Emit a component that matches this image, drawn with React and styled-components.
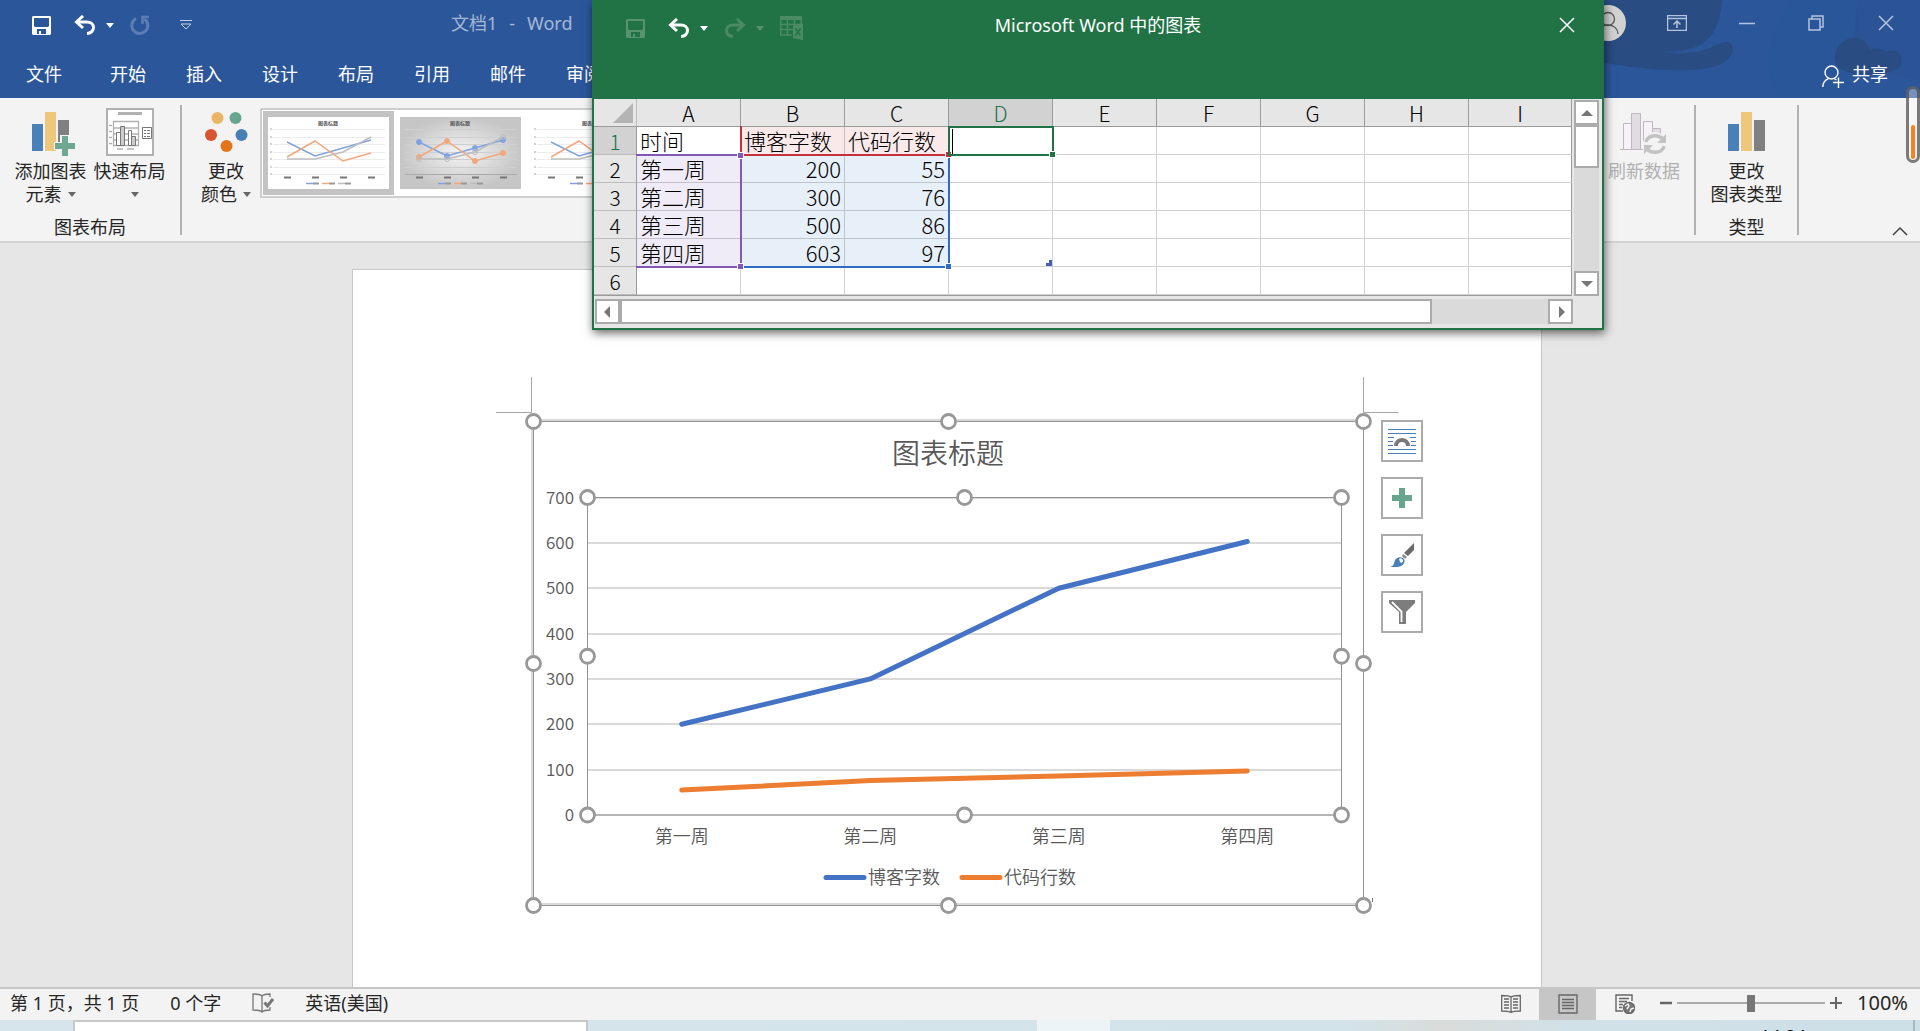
import React, { useState } from 'react';
import styled, { createGlobalStyle } from 'styled-components';

const GlobalStyle = createGlobalStyle`
	* { box-sizing: border-box; }
	body {
		margin: 0;
		overflow: hidden;
		font-family: "Noto Sans", "Noto Sans CJK SC", sans-serif;
		font-size: 18px;
		color: #262626;
	}
	button {
		border: 0;
		padding: 0;
		background: none;
		font: inherit;
		color: inherit;
	}
	svg { display: block; }
`;

const App = () => {
	return (
		<Shell>
			<GlobalStyle />
			<TitleArea />
			<Ribbon />
			<Workspace>
				<Page>
					<Chart />
					<ChartTools>
						<ToolButton type="button" aria-label="布局选项"><LayoutIcon /></ToolButton>
						<ToolButton type="button" aria-label="图表元素"><PlusIcon /></ToolButton>
						<ToolButton type="button" aria-label="图表样式"><BrushIcon /></ToolButton>
						<ToolButton type="button" aria-label="图表筛选器"><FunnelIcon /></ToolButton>
					</ChartTools>
				</Page>
			</Workspace>
			<StatusBar />
			<Taskbar>
				<TaskSearch />
				<TaskActive />
				<Clock>14:24</Clock>
			</Taskbar>
			<SheetWindow />
			<FloatScroll><i /></FloatScroll>
		</Shell>
	);
};

/* ---------- title bar and tabs ---------- */

const tabs = ['文件', '开始', '插入', '设计', '布局', '引用', '邮件', '审阅'];

const TitleArea = () => (
	<Header>
		<HeaderArt />
		<TitleRow>
			<QuickAccess>
				<button type="button" aria-label="保存"><SaveIcon color="#fff" hole="#2b579a" /></button>
				<Split>
					<button type="button" aria-label="撤消"><UndoIcon color="#fff" /></button>
					<Caret $color="#fff" />
				</Split>
				<button type="button" aria-label="重复" disabled><RepeatIcon /></button>
				<More type="button" aria-label="自定义快速访问工具栏"><MoreIcon /></More>
			</QuickAccess>
			<DocName>
				<span>文档1</span>
				<span>-</span>
				<span>Word</span>
			</DocName>
			<WindowButtons>
				<Avatar />
				<button type="button" aria-label="功能区显示选项">
					<svg width="20" height="16" viewBox="0 0 20 16" fill="none" stroke="#b4c4dd">
						<path d="M.5 .5h19v15H.5zM.5 3.5h19M10 13V6M6.500 9.500 10 6l3.500 3.500" strokeWidth="1.500" />
					</svg>
				</button>
				<button type="button" aria-label="最小化">
					<svg width="16" height="16"><path d="M0 8.500h16" stroke="#b4c4dd" strokeWidth="1.500" /></svg>
				</button>
				<button type="button" aria-label="还原">
					<svg width="16" height="16" fill="none" stroke="#b4c4dd" strokeWidth="1.500">
						<path d="M1 4h11v11H1zM4 4V1h11v11h-3" />
					</svg>
				</button>
				<button type="button" aria-label="关闭">
					<svg width="16" height="16"><path d="m1 1 14 14M15 1 1 15" stroke="#b4c4dd" strokeWidth="1.500" /></svg>
				</button>
			</WindowButtons>
		</TitleRow>
		<TabRow>
			{tabs.map(t => <Tab key={t} type="button">{t}</Tab>)}
			<Share type="button">
				<svg width="22" height="23" viewBox="0 0 22 23" fill="none" stroke="#fff" strokeWidth="1.400">
					<circle cx="9.500" cy="7.500" r="6.500" />
					<path d="M.7 22c.3-4 2.300-7 5.800-8.300M12.500 13.800l2 1M16.500 12.500V23M11 17.500h11" />
				</svg>
				共享
			</Share>
		</TabRow>
	</Header>
);

const HeaderArt = () => (
	<Art width="330" height="98" viewBox="0 0 330 98" aria-hidden="true">
		<path d="M0 0h132c-1 22-8 38-24 46-12 6-30 7-42 4 24 6 46 3 60-5 9-5 16-4 17 3 1 8-9 17-24 20-36 6-84-1-119-8z" fill="#294c82" />
		<path d="M190 98c-18-20-14-64 8-90L205 0h60c8 30-2 70-20 98z" fill="#285397" opacity=".5" />
		<path d="M268 0c-4 18-2 34-4 52 20 20 46 26 66 28V0z" fill="#2a5290" opacity=".5" />
		<path d="M246 64c-4-14 6-26 18-26 10 0 14 6 16 12 8-4 14 2 20 1 10-3 14 8 10 16-14 10-54 12-64-3z" fill="#294c82" />
	</Art>
);

const Header = styled.header`
	position: relative;
	height: 98px;
	background: #2b579a;
	color: #fff;
`;
const Art = styled.svg`
	position: absolute;
	right: 0;
	top: 0;
`;
const TitleRow = styled.div`
	position: relative;
	display: flex;
	align-items: center;
	height: 48px;
	padding: 0 26px 2px 32px;
`;
const QuickButtons = styled.div`
	display: flex;
	align-items: center;
	gap: 16px;

	> button:first-child { padding-right: 7px; }
`;
const QuickAccess = styled(QuickButtons)`
	width: 419px;
	padding-top: 4px;
`;
const More = styled.button`
	padding-left: 14px;
`;
const Split = styled.div`
	display: flex;
	align-items: center;
	gap: 10px;
`;
const Caret = styled.i`
	border: 4px solid transparent;
	border-top: 5px solid ${p => p.$color || '#666'};
	border-bottom: 0;
`;
const DocName = styled.div`
	display: flex;
	gap: 12px;
	line-height: 46px;
	color: #a6b8d6;
`;
const WindowButtons = styled.div`
	display: flex;
	align-items: center;
	gap: 53px;
	margin-left: auto;

	button:nth-of-type(1) { margin-left: -12px; margin-right: -1px; }
	button:nth-of-type(4) { margin-left: 1px; }
`;
const AvatarRing = styled.svg`
	flex: none;
`;
const Avatar = () => (
	<AvatarRing width="36" height="36" viewBox="0 0 36 36" fill="none" stroke="#555" strokeWidth="1.300">
		<circle cx="18" cy="18" r="18" fill="#d2d2d2" stroke="none" />
		<circle cx="18" cy="14" r="6.500" />
		<path d="M8 29c0-5 4-9 10-9s10 4 10 9" />
	</AvatarRing>
);
const TabRow = styled.nav`
	position: relative;
	display: flex;
	align-items: center;
	height: 50px;
	padding-right: 32px;
`;
const Tab = styled.button`
	padding: 0 20px;

	&:first-child { padding: 0 28px 0 26px; }
`;
const Share = styled.button`
	display: flex;
	align-items: center;
	gap: 8px;
	margin-left: auto;

	svg { margin-top: 6px; }
`;

/* ---------- ribbon ---------- */

const Ribbon = () => (
	<RibbonBar>
		<Group>
			<Tools>
				<BigButton type="button">
					<AddElementIcon />
					<span>添加图表</span>
					<Line>元素<Caret /></Line>
				</BigButton>
				<BigButton type="button">
					<QuickLayoutIcon />
					<span>快速布局</span>
					<Line>&nbsp;<Caret /></Line>
				</BigButton>
			</Tools>
			<GroupName>图表布局</GroupName>
		</Group>
		<Rule />
		<ColorGroup>
			<BigButton type="button">
				<ColorsIcon />
				<span>更改</span>
				<Line>颜色<Caret /></Line>
			</BigButton>
		</ColorGroup>
		<Gallery>
			<Style type="button" $active aria-label="样式 1"><Thumb /></Style>
			<Style type="button" aria-label="样式 2"><Thumb dark /></Style>
			<Style type="button" aria-label="样式 3"><Thumb /></Style>
		</Gallery>
		<DataGroup>
			<BigButton type="button" disabled>
				<RefreshIcon />
				<span>刷新数据</span>
			</BigButton>
		</DataGroup>
		<Rule />
		<TypeGroup>
			<BigButton type="button">
				<BarsIcon />
				<span>更改</span>
				<Line>图表类型</Line>
			</BigButton>
			<GroupName>类型</GroupName>
		</TypeGroup>
		<Rule />
		<RibbonEnd>
			<button type="button" aria-label="折叠功能区">
				<svg width="16" height="10"><path d="m1 9 7-7 7 7" fill="none" stroke="#444" strokeWidth="1.500" /></svg>
			</button>
		</RibbonEnd>
	</RibbonBar>
);

const RibbonBar = styled.section`
	display: flex;
	height: 145px;
	padding-top: 7px;
	background: #f3f3f3;
	border-bottom: 2px solid #d2d2d2;
`;
const Group = styled.div`
	display: flex;
	flex-direction: column;
	align-items: center;
	gap: 3px;
	width: 180px;
	padding-top: 3px;
`;
const Tools = styled.div`
	display: flex;
	gap: 7px;
`;
const BigButton = styled.button`
	display: flex;
	flex-direction: column;
	align-items: center;
	height: 104px;
	line-height: 23px;
	white-space: nowrap;

	svg { height: 50px; margin-bottom: 2px; }
	&:disabled { color: #b1b1b1; }
`;
const Line = styled.span`
	display: flex;
	align-items: center;
	gap: 6px;
	min-height: 23px;
`;
const GroupName = styled.span`
	line-height: 24px;
`;
const Rule = styled.i`
	width: 2px;
	height: 130px;
	background: #b1b1b1;
`;
const ColorGroup = styled(Group)`
	width: 78px;
	padding-left: 10px;
`;
const Gallery = styled.div`
	display: flex;
	gap: 1px;
	flex: 1;
	height: 90px;
	margin: 3px 60px 0 0;
	padding-left: 1px;
	overflow: hidden;
	background: #fff;
	border: 2px solid #cfcfcf;
`;
const Style = styled.button`
	flex: none;
	width: 131px;
	margin: 1px 0;
	padding: 0 5px;
	background: ${p => (p.$active ? '#c3c3c3' : 'transparent')};
`;
const DataGroup = styled(Group)`
	width: 100px;
`;
const TypeGroup = styled(Group)`
	width: 101px;
`;
const RibbonEnd = styled.div`
	display: flex;
	align-items: flex-end;
	justify-content: flex-end;
	width: 121px;
	padding: 0 12px 5px 0;
`;

const thumbSeries = [
	['#7ea3e0', [[19, 25], [47, 39], [75, 31], [103, 23]]],
	['#f4a77b', [[19, 40], [47, 24], [75, 44], [103, 36]]],
	['#bdbdbd', [[19, 42], [47, 42], [75, 35], [103, 20]]],
];

const Thumb = ({ dark }) => (
	<svg width="121" height="72" viewBox="0 0 121 72">
		<defs>
			<radialGradient id="thumbShade">
				<stop offset="0" stopColor="#f4f4f4" />
				<stop offset="1" stopColor="#c6c6c6" />
			</radialGradient>
		</defs>
		<rect width="121" height="72" fill={dark ? 'url(#thumbShade)' : '#fff'} />
		{[12, 20, 27, 35, 42, 50, 57].map(y => <path key={y} d={`M5 ${y}.5h112`} stroke={dark ? '#cfcfcf' : '#ececec'} />)}
		{!dark && [12, 20, 27, 35, 42, 50, 57].map(y => <path key={y} d={`M2 ${y}h2`} stroke="#aaa" />)}
		{dark && <path d="M5 57.500h112" stroke="#aaa" />}
		<text x="60" y="8" fontSize="5" fontWeight="700" textAnchor="middle" fill="#555">图表标题</text>
		{thumbSeries.map(([c, pts]) => (
			<g key={c} stroke={c} fill={c}>
				<polyline points={pts.join(' ')} fill="none" strokeWidth="1.500" />
				{dark && pts.map(([x, y]) => <circle key={x} cx={x} cy={y} r="2.500" fill={c === '#bdbdbd' ? 'none' : c} />)}
			</g>
		))}
		{[19, 47, 75, 103].map(x => <path key={x} d={`M${x - 3} 60.500h7`} stroke="#777" strokeWidth="2" />)}
		{[[38, '#7ea3e0'], [54, '#f4a77b'], [70, '#bdbdbd']].map(([x, c]) => (
			<g key={x}>
				<path d={`M${x} 66.500h7`} stroke={c} strokeWidth="1.500" />
				<path d={`M${x + 7} 66.500h6`} stroke="#999" strokeWidth="2" />
			</g>
		))}
	</svg>
);

/* ---------- document ---------- */

const Workspace = styled.main`
	flex: 1;
	display: flex;
	justify-content: center;
	padding: 26px 26px 0 0;
	background: #e6e6e6;
`;
const Page = styled.div`
	display: flex;
	align-items: flex-start;
	width: 1190px;
	padding: 107px 0 0 143px;
	background: #fff;
	border: 1px solid #c8c8c8;
	border-bottom: 0;
`;
const ChartTools = styled.div`
	display: flex;
	flex-direction: column;
	gap: 15px;
	margin-top: 43px;
`;
const ToolButton = styled.button`
	display: grid;
	place-items: center;
	width: 42px;
	height: 42px;
	background: #fff;
	border: 2px solid #ababab;
`;

const weeks = [
	{ name: '第一周', blog: 200, code: 55 },
	{ name: '第二周', blog: 300, code: 76 },
	{ name: '第三周', blog: 500, code: 86 },
	{ name: '第四周', blog: 603, code: 97 },
];

const frame = { x: 37.5, y: 44.5, w: 830, h: 484 };
const plot = { x: 91.5, y: 120.5, w: 754, h: 317.5 };

const xAt = i => plot.x + (plot.w * (i + 0.5)) / weeks.length;
const yAt = v => plot.y + plot.h - (plot.h * v) / 700;
const pointsOf = key => weeks.map((w, i) => `${xAt(i)},${yAt(w[key])}`).join(' ');

const Handles = ({ box }) => {
	const dots = [];
	[0, 0.5, 1].forEach(a => [0, 0.5, 1].forEach(b => {
		if (a !== 0.5 || b !== 0.5) dots.push([box.x + box.w * a, box.y + box.h * b]);
	}));
	return dots.map(([x, y]) => <circle key={`${x}-${y}`} cx={x} cy={y} r="7" fill="#fff" stroke="#989898" strokeWidth="2.800" />);
};

const Chart = () => (
	<ChartSvg width="885" height="540" viewBox="0 0 885 540">
		{/* margin corners of the page */}
		<path d="M0 35.500h35.500V0M867.500 0v35.500h35" fill="none" stroke="#a6a6a6" />
		<path d="M36 528V43h831M36 527h831" fill="none" stroke="#d9d9d9" strokeWidth="2" />
		<rect x={frame.x} y={frame.y} width={frame.w} height={frame.h} fill="none" stroke="#929292" />
		<path d="M876.500 521v4" stroke="#777" />

		<ChartTitle x="452" y="87">图表标题</ChartTitle>
		{[0, 100, 200, 300, 400, 500, 600, 700].map(v => (
			<g key={v}>
				<path d={`M${plot.x} ${Math.round(yAt(v))}h${plot.w}`} stroke="#d9d9d9" strokeWidth="2" />
				<AxisText x="78" y={yAt(v) + 6} textAnchor="end">{v}</AxisText>
			</g>
		))}
		<rect x={plot.x} y={plot.y} width={plot.w} height={plot.h} fill="none" stroke="#929292" />
		{weeks.map((w, i) => <Label key={w.name} x={xAt(i)} y="466" textAnchor="middle">{w.name}</Label>)}

		<g fill="none" strokeWidth="5" strokeLinecap="round" strokeLinejoin="round">
			<polyline points={pointsOf('blog')} stroke="#4472c4" />
			<polyline points={pointsOf('code')} stroke="#ed7d31" />
			<path d="M330 500.500h38" stroke="#4472c4" />
			<path d="M466 500.500h38" stroke="#ed7d31" />
		</g>
		<Label x="372" y="507">博客字数</Label>
		<Label x="508" y="507">代码行数</Label>

		<Handles box={frame} />
		<Handles box={plot} />
	</ChartSvg>
);

const ChartSvg = styled.svg`
	flex: none;
	overflow: visible;
	font-family: "Noto Sans CJK SC", sans-serif;
	font-weight: 350;
	fill: #595959;
`;
const ChartTitle = styled.text`
	font-size: 28px;
	text-anchor: middle;
`;
const AxisText = styled.text`
	font-size: 17px;
`;
const Label = styled.text`
	font-size: 18px;
`;

/* ---------- data sheet window ---------- */

const columns = ['A', 'B', 'C', 'D', 'E', 'F', 'G', 'H', 'I'];
const cells = [
	['时间', '博客字数', '代码行数'],
	...weeks.map(w => [w.name, w.blog, w.code]),
	[],
];

const toneOf = (r, c) => {
	if (r === 0 && (c === 1 || c === 2)) return '#f9e9e9';
	if (r > 0 && r < 5 && c === 0) return '#f0ecf7';
	if (r > 0 && r < 5 && c < 3) return '#e7eff9';
	return '#fff';
};

const SheetWindow = () => (
	<Win>
		<WinBar>
			<WinTools>
				<button type="button" aria-label="保存数据" disabled><SaveIcon color="#57936e" hole="#217346" /></button>
				<Split>
					<button type="button" aria-label="撤消输入"><UndoIcon color="#fff" /></button>
					<Caret $color="#fff" />
				</Split>
				<Split>
					<button type="button" aria-label="恢复" disabled><RedoIcon /></button>
					<Caret $color="#57936e" />
				</Split>
				<button type="button" aria-label="在 Excel 中编辑数据"><SheetIcon /></button>
			</WinTools>
			<span>Microsoft Word 中的图表</span>
			<WinClose type="button" aria-label="关闭数据表">
				<svg width="16" height="16"><path d="m1 1 14 14M15 1 1 15" stroke="#fff" strokeWidth="1.600" /></svg>
			</WinClose>
		</WinBar>
		<SheetBody>
			<GridWrap>
				<Table>
					<colgroup>
						<col width="43" />
						{columns.map(c => <col key={c} width={c === 'I' ? 103 : 104} />)}
					</colgroup>
					<thead>
						<tr>
							<Corner aria-label="全选"><svg width="20" height="20"><path d="M20 0v20H0z" fill="#b4b4b4" /></svg></Corner>
							{columns.map(c => <Th key={c} scope="col" $on={c === 'D'}>{c}</Th>)}
						</tr>
					</thead>
					<tbody>
						{cells.map((row, r) => (
							<tr key={r}>
								<Th scope="row" $row $on={r === 0}>{r + 1}</Th>
								{columns.map((c, i) => (
									<Td key={c} $tone={toneOf(r, i)} $num={typeof row[i] === 'number'}>{row[i]}</Td>
								))}
							</tr>
						))}
					</tbody>
				</Table>
				<Range $col={1} $row={1} $cols={2} $rows={4} $color="#2f6ac4" $sides="0 2px 2px 0"><Grip /></Range>
				<Range $col={1} $row={0} $cols={2} $rows={1} $color="#c4303b" $sides="0 2px 2px 2px"><Grip /></Range>
				<Range $col={0} $row={1} $cols={1} $rows={4} $color="#8458b8" $sides="2px 2px 2px 0"><Grip $top /><Grip /></Range>
				<Range $col={3} $row={0} $cols={1} $rows={1} $color="#217346" $sides="2px"><Cursor /><Grip /></Range>
				<TableEnd />
			</GridWrap>
			<VScroll>
				<ArrowBox type="button" aria-label="向上滚动"><Arrow d="M0 7 6 1l6 6z" /></ArrowBox>
				<VThumb />
				<ArrowBox type="button" aria-label="向下滚动"><Arrow d="M0 1h12L6 7z" /></ArrowBox>
			</VScroll>
		</SheetBody>
		<HScroll>
			<ArrowBox type="button" aria-label="向左滚动"><Arrow d="M8 -2v12L2 4z" /></ArrowBox>
			<HThumb />
			<ArrowBox type="button" aria-label="向右滚动"><Arrow d="M4 -2v12l6-6z" /></ArrowBox>
		</HScroll>
	</Win>
);

const Arrow = ({ d }) => <svg width="12" height="8" overflow="visible"><path d={d} fill="#777" /></svg>;

const Win = styled.section`
	position: absolute;
	left: 592px;
	top: 0;
	width: 1012px;
	padding-bottom: 4px;
	background: #e6e6e6;
	border: 2px solid #217346;
	border-top: 0;
	box-shadow: 1px 3px 9px rgba(0, 0, 0, 0.6);
`;
const WinBar = styled.div`
	position: relative;
	display: flex;
	justify-content: center;
	height: 99px;
	line-height: 24px;
	padding-top: 13px;
	background: #217346;
	color: #fff;
`;
const WinTools = styled(QuickButtons)`
	position: absolute;
	left: 32px;
	top: 16px;
`;
const WinClose = styled.button`
	position: absolute;
	right: 27px;
	top: 17px;
`;
const SheetBody = styled.div`
	display: flex;
	gap: 2px;
`;
const GridWrap = styled.div`
	position: relative;
	border-bottom: 1px solid #9b9b9b;
`;
const Table = styled.table`
	width: 978px;
	table-layout: fixed;
	border-collapse: separate;
	border-spacing: 0;
	font-family: "Noto Sans CJK SC", sans-serif;
	font-weight: 300;
	font-size: 22px;
	line-height: 27px;
	color: #000;
`;
const Th = styled.th`
	height: 28px;
	padding: 2px 0 0;
	font-size: 21px;
	line-height: 25px;
	font-weight: 300;
	text-align: center;
	color: ${p => (p.$on ? '#217346' : '#000')};
	background: ${p => (p.$on ? '#d2d2d2' : '#e6e6e6')};
	border-right: 1px solid #9b9b9b;
	border-bottom: 1px solid ${p => (p.$row ? '#bcbcbc' : '#9b9b9b')};
`;
const Corner = styled.td`
	padding: 0 3px 3px 19px;
	vertical-align: bottom;
	border-right: 1px solid #bcbcbc;
	border-bottom: 1px solid #9b9b9b;
`;
const Td = styled.td`
	height: 28px;
	padding: 0 3px;
	white-space: nowrap;
	text-align: ${p => (p.$num ? 'right' : 'left')};
	background: ${p => p.$tone};
	border-right: 1px solid rgba(0, 0, 0, 0.18);
	border-bottom: 1px solid rgba(0, 0, 0, 0.18);

	&:last-child { border-right-color: #9b9b9b; }
`;
const Range = styled.div`
	position: absolute;
	left: ${p => 42 + p.$col * 104}px;
	top: ${p => 27 + p.$row * 28}px;
	width: ${p => p.$cols * 104 + 2}px;
	height: ${p => p.$rows * 28 + 2}px;
	border: 0 solid ${p => p.$color};
	border-width: ${p => p.$sides};
	color: ${p => p.$color};
	pointer-events: none;
`;
const Grip = styled.i`
	position: absolute;
	right: -4px;
	${p => (p.$top ? 'top: -4px;' : 'bottom: -4px;')}
	width: 7px;
	height: 7px;
	background: currentColor;
	border: 1px solid #fff;
`;
const Cursor = styled.i`
	position: absolute;
	left: 2px;
	top: 1px;
	width: 1px;
	height: 25px;
	background: #000;
`;
const TableEnd = styled.i`
	position: absolute;
	left: 452px;
	top: 161px;
	width: 6px;
	height: 6px;
	background: #4a5cb5;
	clip-path: polygon(50% 0, 100% 0, 100% 100%, 0 100%, 0 50%, 50% 50%);
`;
const ArrowBox = styled.button`
	flex: none;
	display: grid;
	place-items: center;
	width: 25px;
	height: 25px;
	background: #fff;
	border: 2px solid #ababab;
`;
const VScroll = styled.div`
	display: flex;
	flex-direction: column;
	justify-content: space-between;
	margin-top: 1px;
	background: #dadada;
`;
const VThumb = styled.div`
	height: 43px;
	margin-bottom: auto;
	background: #fff;
	border: 2px solid #ababab;
`;
const HScroll = styled.div`
	display: flex;
	justify-content: space-between;
	width: 978px;
	margin: 3px 0 0 1px;
	background: #dadada;
`;
const HThumb = styled.div`
	width: 812px;
	margin-right: auto;
	background: #fff;
	border: 2px solid #ababab;
`;

const FloatScroll = styled.div`
	position: absolute;
	right: 0;
	top: 86px;
	display: flex;
	align-items: flex-end;
	width: 14px;
	height: 77px;
	padding: 1px 2px;
	background: rgba(255, 255, 255, 0.35);
	border: 3px solid rgba(80, 80, 80, 0.75);
	border-radius: 7px;

	i {
		width: 100%;
		height: 34px;
		border-radius: 3px;
		background: #ff7f1a;
	}
`;

/* ---------- status bar ---------- */

const StatusBar = () => {
	const [zoom, setZoom] = useState(50);
	return (
		<Status>
			<span>第 1 页，共 1 页</span>
			<span>0 个字</span>
			<svg width="22" height="20" viewBox="0 0 22 20" fill="none" stroke="#777" strokeWidth="1.300">
				<path d="M10 19V3C8 1 4 1 1 1v16c3 0 7 0 9 2 2-2 4-2 8-2v-3M10 3c2-2 5-2 8-2v3" />
				<path d="m12.500 9.500 3 3.500 5.500-7" strokeWidth="3" />
			</svg>
			<span>英语(美国)</span>
			<Views>
				<View type="button" aria-label="阅读视图">
					<svg width="20" height="20" viewBox="0 0 20 20" fill="none" stroke="#666" strokeWidth="1.300">
						<path d="M10 19V3C8 1.500 4 1.500 .7 1.500V17c3.300 0 7.300 0 9.300 1.500 2-1.500 6-1.500 9.300-1.500V1.500C16 1.500 12 1.500 10 3M3 5h5M3 8h5M3 11h5M3 14h5M12 5h5M12 8h5M12 11h5M12 14h5" />
					</svg>
				</View>
				<View type="button" $active aria-label="页面视图">
					<svg width="20" height="20" viewBox="0 0 20 20" fill="none" stroke="#666" strokeWidth="1.400">
						<path d="M1 1h18v18H1zM4 5.500h12M4 8.500h12M4 11.500h12M4 14.500h12" />
					</svg>
				</View>
				<View type="button" aria-label="Web 版式视图">
					<svg width="20" height="20" viewBox="0 0 20 20" fill="none" stroke="#666" strokeWidth="1.400">
						<path d="M8 17H1V1h16v6M4 4.500h10M4 7.500h8M4 10.500h4M4 13.500h3" />
						<circle cx="14" cy="14" r="5.500" fill="#777" />
						<path d="m10 12 3-2 1 2-2 3M15 18l1-3 3-1" stroke="#f3f3f3" />
					</svg>
				</View>
			</Views>
			<Zoom>
				<button type="button" aria-label="缩小">
					<svg width="12" height="12"><path d="M0 6h12" stroke="#666" strokeWidth="2.500" /></svg>
				</button>
				<Slider type="range" aria-label="缩放" min="0" max="100" value={zoom} onChange={e => setZoom(Number(e.target.value))} />
				<button type="button" aria-label="放大">
					<svg width="12" height="12"><path d="M0 6h12M6 0v12" stroke="#666" strokeWidth="2" /></svg>
				</button>
				<span>100%</span>
			</Zoom>
		</Status>
	);
};

const Status = styled.footer`
	display: flex;
	align-items: center;
	gap: 31px;
	height: 33px;
	padding: 0 12px 0 10px;
	line-height: 24px;
	background: #f3f3f3;
	border-top: 2px solid #c6c6c6;

	> span { padding-bottom: 3px; }
	> svg { margin-bottom: 3px; }
`;
const Views = styled.div`
	display: flex;
	align-self: stretch;
	margin-left: auto;
`;
const View = styled.button`
	display: grid;
	place-items: center;
	width: 57px;
	padding-bottom: 2px;
	background: ${p => (p.$active ? '#c6c6c6' : 'transparent')};
`;
const Zoom = styled.div`
	display: flex;
	align-items: center;
	gap: 5px;
	margin-left: -24px;
	padding-bottom: 3px;

	span {
		margin-left: 10px;
		font-size: 20px;
	}
`;
const Slider = styled.input`
	appearance: none;
	width: 148px;
	height: 18px;
	margin: 0;
	background: linear-gradient(#ababab, #ababab) center / 100% 2px no-repeat;

	&::-webkit-slider-thumb {
		appearance: none;
		width: 8px;
		height: 17px;
		background: #777;
	}
`;

const Taskbar = styled.div`
	display: flex;
	height: 11px;
	overflow: hidden;
	background: linear-gradient(90deg, #d5e5eb 0%, #d3e3ea 70%, #d9dcda 75%, #d1e1e8 82%, #cddfe7 100%);
`;
const TaskSearch = styled.div`
	width: 515px;
	margin-left: 73px;
	background: #fff;
	border: 2px solid #c8c8c8;
	border-bottom: 0;
`;
const TaskActive = styled.div`
	width: 73px;
	margin-left: 449px;
	background: #edf4f7;
`;
const Clock = styled.span`
	margin-left: auto;
	padding: 4px 107px 0 0;
	border-right: 2px solid #a9b6bc;
	margin-right: 5px;
	line-height: 24px;
	color: #000;
`;

const Shell = styled.div`
	position: relative;
	display: flex;
	flex-direction: column;
	height: 100vh;
`;

/* ---------- icons ---------- */

const SaveIcon = ({ color, hole }) => (
	<svg width="19" height="19" viewBox="0 0 19 19">
		<path d="M1 0h17l1 1v17l-1 1H1l-1-1V1z" fill={color} />
		<path d="M2 2h15v8l-1 1H3l-1-1zM5 13h9v5H9v-3H7v3H5z" fill={hole} />
	</svg>
);

const UndoIcon = ({ color }) => (
	<svg width="22" height="20" viewBox="0 0 22 20" fill="none" stroke={color} strokeWidth="3">
		<path d="M3 7h10c4 0 6.500 2.500 6.500 5.500S17 18.500 13 18.500" />
		<path d="M9 1 2.500 7 9 13" />
	</svg>
);

const RedoIcon = () => (
	<svg width="22" height="20" viewBox="0 0 22 20" fill="none" stroke="#4a8b64" strokeWidth="3">
		<path d="M19 7H9c-4 0-6.500 2.500-6.500 5.500S5 18.500 9 18.500" />
		<path d="m13 1 6.500 6L13 13" />
	</svg>
);

const RepeatIcon = () => (
	<svg width="20" height="20" viewBox="0 0 20 20" fill="none" stroke="#5c7db3" strokeWidth="3">
		<path d="M6 3.500a8 8 0 1 0 8.500.5" />
		<path d="M12.500 9V2H19" strokeWidth="2.500" />
	</svg>
);

const MoreIcon = () => (
	<svg width="12" height="12" viewBox="0 0 12 12" fill="none" stroke="#c3d0e4">
		<path d="M0 1.500h12M1 5h10l-5 5z" />
	</svg>
);

const SheetIcon = () => (
	<svg width="24" height="24" viewBox="0 0 24 24">
		<path d="M0 0h22v4H0z" fill="#4a8b64" />
		<path d="M.7 3v16H12M1 8.500h20M1 13.500h12M7.500 4v15M14.500 4v8M21.300 4v5" fill="none" stroke="#4a8b64" strokeWidth="1.500" />
		<path d="m13 10 10-2v16l-10-2z" fill="#4a8b64" />
		<path d="m15.500 12.500 5 7M20.500 12.500l-5 7" stroke="#217346" strokeWidth="1.500" />
	</svg>
);

const AddElementIcon = () => (
	<svg width="51" height="50" viewBox="-7 0 51 50">
		<path d="M0 16h11v27H0z" fill="#4a80b8" />
		<path d="M13 4h11v39H13z" fill="#eec77d" />
		<path d="M26 12h11v22H26z" fill="#808080" />
		<path d="M28 27h10v7h6v8h-6v7H28v-7h-6v-8h6z" fill="#f3f3f3" />
		<path d="M30 28h6v7h7v6h-7v7h-6v-7h-7v-6h7z" fill="#6fa892" />
	</svg>
);

const QuickLayoutIcon = () => (
	<svg width="48" height="50" viewBox="0 0 48 50" fill="none" stroke="#b1b1b1">
		<path d="M1 1h46v46H1z" fill="#fff" strokeWidth="2" />
		<path d="M12 5.500h24" strokeWidth="3" />
		<path d="M7.500 13.500h25v24h-25zM8 20h24M8 26h24M8 32h24M3 17.500h3M3 23.500h3M3 29.500h3M3 35.500h3M11 41h6M21 41h7" strokeWidth="1.300" />
		<path d="M10.500 24.500h4v13h-4zM22.500 22.500h3v15h-3z" fill="#fff" stroke="#777" />
		<path d="M14.500 18.500h4v19h-4zM25.500 28.500h4v9h-4z" fill="#ccc" stroke="#777" />
		<path d="M36.500 19.500h9v11h-9zM38 22.500h2m1 0h3M38 25.500h2m1 0h3M38 28.500h2m1 0h3" stroke="#777" />
	</svg>
);

const ColorsIcon = () => (
	<svg width="43" height="50" viewBox="0 0 43 50">
		<circle cx="12.500" cy="10" r="6" fill="#eab565" />
		<circle cx="30.500" cy="10" r="6" fill="#68a58f" />
		<circle cx="6" cy="27" r="6" fill="#d85432" />
		<circle cx="36.500" cy="27" r="6" fill="#4a7fb5" />
		<circle cx="21.500" cy="38" r="6" fill="#e2751c" />
	</svg>
);

const RefreshIcon = () => (
	<svg width="48" height="50" viewBox="0 0 48 50" fill="none" stroke="#bdb9bd">
		<path d="M3.500 15.500h8v26h-8zM23.500 13.500h9v24h-9z" fill="#f6f2f8" />
		<path d="M11.500 5.500h9v36h-9zM32.500 20.500h8v9h-8z" fill="#e0dce2" />
		<path d="M0 41.500h23" />
		<circle cx="35" cy="36" r="12" fill="#f3f3f3" stroke="none" />
		<path d="M26 34c1-6 11-9 17-3M44 38c-1 6-11 9-17 3" stroke="#c3c3c3" strokeWidth="3.500" />
		<path d="M46 26v9h-9zM24 46v-9h9z" fill="#c3c3c3" stroke="none" />
	</svg>
);

const BarsIcon = () => (
	<svg width="37" height="50" viewBox="0 0 37 50">
		<path d="M0 16h11v27H0z" fill="#4a80b8" />
		<path d="M13 4h11v39H13z" fill="#eec77d" />
		<path d="M26 12h11v31H26z" fill="#808080" />
	</svg>
);

const LayoutIcon = () => (
	<svg width="28" height="28" viewBox="0 0 28 28" fill="none">
		<path d="M0 2.500h28M0 6.500h28M0 10.500h6M22 10.500h6M0 14.500h5M23 14.500h5M0 18.500h5M23 18.500h5M0 22.500h28M0 26.500h28" stroke="#4a80b8" strokeWidth="1.200" />
		<path d="M8 19c0-8 12-8 12 0" stroke="#7a7a7a" strokeWidth="4" />
	</svg>
);

const PlusIcon = () => (
	<svg width="20" height="20"><path d="M7 0h6v7h7v6h-7v7H7v-7H0V7h7z" fill="#68a58f" /></svg>
);

const BrushIcon = () => (
	<svg width="26" height="26" viewBox="0 0 26 26">
		<path d="M25 1v7l-6 6-4-3z" fill="#6b6b6b" />
		<path d="m14 12 4 3-2 2-3-3z" fill="#8a8a8a" />
		<path d="M1 25c4-1 4-4 5-7 2-3 6-4 9-1 2 4-2 8-7 8z" fill="#4a80b8" />
		<path d="M10 17c2-2 4 0 4 2s-3 2-3 1z" fill="#fff" />
	</svg>
);

const FunnelIcon = () => (
	<svg width="26" height="26" viewBox="0 0 26 26">
		<path d="M0 1h26v3l-9 9v12h-7V13L0 4z" fill="#7d7d7d" />
		<path d="m3 3 9.500 9.500V23" fill="none" stroke="#fff" strokeWidth="1.800" />
	</svg>
);

export default App;
